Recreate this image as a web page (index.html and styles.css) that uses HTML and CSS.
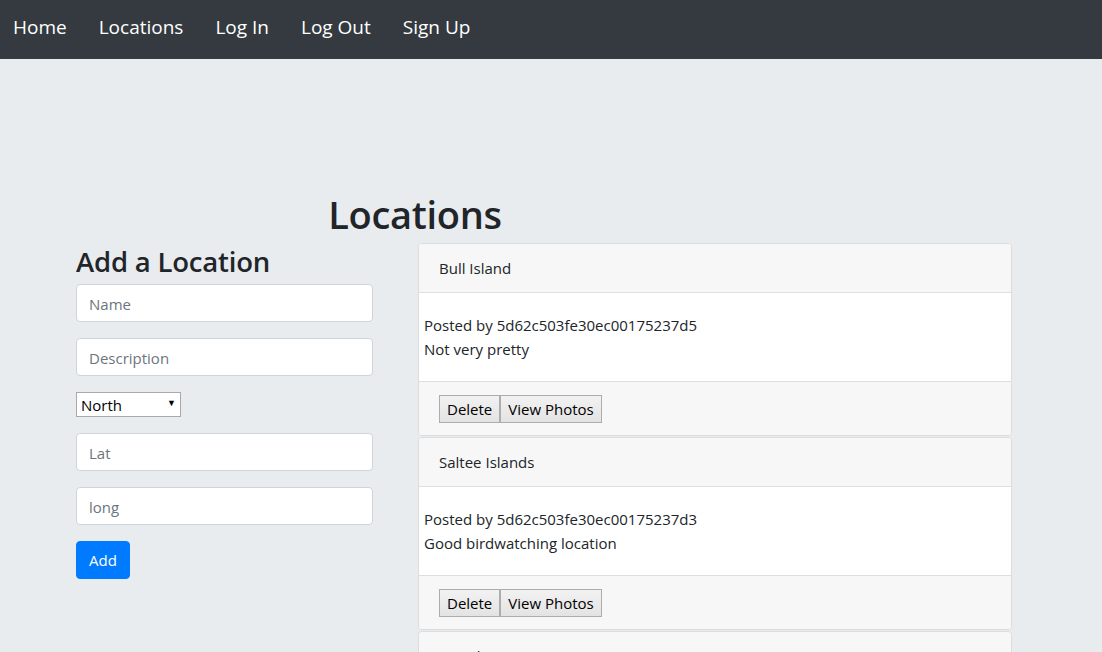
FILE: index.html
```html
<!DOCTYPE html>
<html lang="en">
<head>
<meta charset="utf-8">
<title>Locations</title>
<link rel="stylesheet" href="styles.css">
</head>
<body>
<nav class="navbar">
  <a class="nav-link" href="#">Home</a>
  <a class="nav-link" href="#">Locations</a>
  <a class="nav-link" href="#">Log In</a>
  <a class="nav-link" href="#">Log Out</a>
  <a class="nav-link" href="#">Sign Up</a>
</nav>
<main class="page">
  <div class="title-wrap"><h1 class="title">Locations</h1></div>
  <div class="row">
    <section class="form-col">
      <h2 class="form-title">Add a Location</h2>
      <form class="form">
        <input class="field" type="text" placeholder="Name">
        <input class="field" type="text" placeholder="Description">
        <div class="select-wrap">
          <select class="select">
            <option>North</option>
            <option>South</option>
            <option>East</option>
            <option>West</option>
          </select>
          <span class="select-arrow">&#9660;</span>
        </div>
        <input class="field" type="text" placeholder="Lat">
        <input class="field" type="text" placeholder="long">
        <button class="btn-add" type="button">Add</button>
      </form>
    </section>
    <section class="list-col">
      <div class="card">
        <div class="card-header">Bull Island</div>
        <div class="card-body">
          <div>Posted by 5d62c503fe30ec00175237d5</div>
          <div>Not very pretty</div>
        </div>
        <div class="card-footer">
          <button class="btn-legacy" type="button">Delete</button><button class="btn-legacy" type="button">View Photos</button>
        </div>
      </div>
      <div class="card">
        <div class="card-header">Saltee Islands</div>
        <div class="card-body">
          <div>Posted by 5d62c503fe30ec00175237d3</div>
          <div>Good birdwatching location</div>
        </div>
        <div class="card-footer">
          <button class="btn-legacy" type="button">Delete</button><button class="btn-legacy" type="button">View Photos</button>
        </div>
      </div>
      <div class="card">
        <div class="card-header">Kinsale</div>
      </div>
    </section>
  </div>
</main>
</body>
</html>
```
FILE: styles.css
```css
* { box-sizing: border-box; }
html, body {
  margin: 0;
  padding: 0;
}
body {
  background: #e9ecef;
  color: #212529;
  font-family: "Open Sans", "Noto Sans", "Liberation Sans", sans-serif;
  font-size: 15px;
  line-height: 24px;
  overflow: hidden;
  height: 652px;
}
.navbar {
  background: #343a40;
  height: 59px;
  display: flex;
  align-items: center;
  padding: 0 0 0 13px;
  gap: 32px;
}
.nav-link {
  color: #fff;
  text-decoration: none;
  font-size: 19px;
  line-height: 24px;
  padding-bottom: 5px;
}
.page {
  width: 936px;
  margin: 0 0 0 76px;
  padding-top: 131px;
}
.title-wrap {
  width: 678px;
  text-align: center;
}
.title {
  margin: 0 0 5px 0;
  font-size: 38px;
  font-weight: 600;
  line-height: 48px;
  letter-spacing: -0.3px;
}
.row {
  display: flex;
  gap: 45px;
  align-items: flex-start;
}
.form-col {
  width: 297px;
  flex: none;
}
.form-title {
  margin: 0 0 3px 0;
  font-size: 27.5px;
  font-weight: 600;
  line-height: 38px;
  letter-spacing: -0.2px;
}
.form {
  display: flex;
  flex-direction: column;
  align-items: flex-start;
  gap: 16px;
}
.field {
  width: 297px;
  height: 38px;
  border: 1px solid #ced4da;
  border-radius: 4px;
  background: #fff;
  padding: 7px 12px 5px;
  font-family: inherit;
  font-size: 15px;
  color: #495057;
  outline: none;
}
.field::placeholder { color: #6c757d; opacity: 1; }
.select-wrap {
  position: relative;
  width: 105px;
  height: 25px;
}
.select {
  appearance: none;
  -webkit-appearance: none;
  width: 105px;
  height: 25px;
  border: 1px solid #a9a9a9;
  border-radius: 0;
  background: #fff;
  color: #000;
  font-family: inherit;
  font-size: 15px;
  line-height: 22px;
  padding: 0 0 0 4px;
  outline: none;
}
.select-arrow {
  position: absolute;
  right: 5px;
  top: 5px;
  font-size: 9px;
  line-height: 12px;
  color: #000;
  pointer-events: none;
}
.btn-add {
  height: 38px;
  padding: 0 12px;
  border: 1px solid #007bff;
  border-radius: 4px;
  background: #007bff;
  color: #fff;
  font-family: inherit;
  font-size: 15px;
}
.list-col {
  width: 594px;
  flex: none;
  display: flex;
  flex-direction: column;
  gap: 1px;
}
.card {
  background: #fff;
  border: 1px solid #dcdcdc;
  border-radius: 4px;
  overflow: hidden;
}
.card-header {
  background: #f7f7f7;
  height: 49px;
  border-bottom: 1px solid #dfdfdf;
  padding: 12px 20px;
  font-size: 15px;
  line-height: 24px;
}
.card-body {
  padding: 20px 5px 20px;
  height: 88px;
}
.card-footer {
  background: #f7f7f7;
  border-top: 1px solid #dfdfdf;
  height: 54px;
  padding: 13px 20px 0;
  display: flex;
  align-items: flex-start;
}
.btn-legacy {
  height: 28px;
  padding: 0 7px;
  border: 1px solid #adadad;
  border-radius: 0;
  background: linear-gradient(#f2f2f2, #e3e3e3);
  color: #000;
  font-family: inherit;
  font-size: 15px;
  line-height: 24px;
  margin: 0;
}
```
